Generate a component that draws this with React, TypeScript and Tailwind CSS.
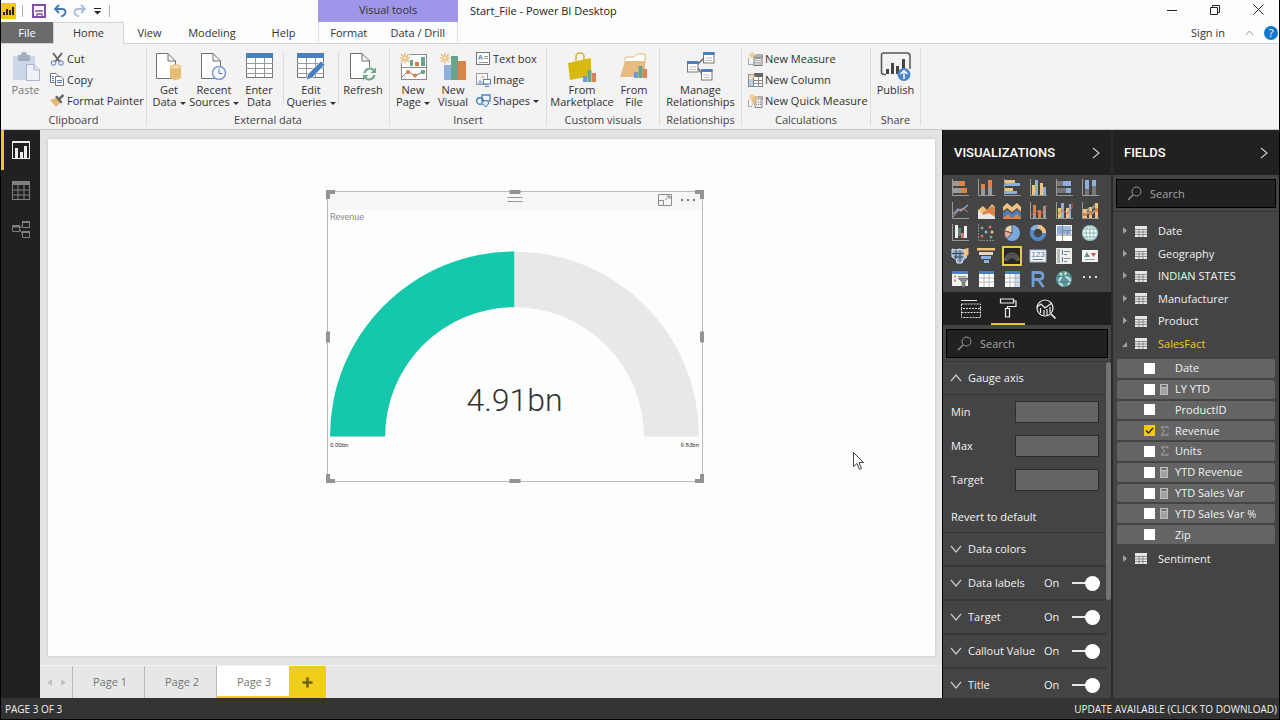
import React from 'react';

type Bar = [number, number, number, number, string];

const OR = '#e08146';
const BL = '#8bb0dc';
const DB = '#4a7fbd';
const YE = '#f0c27d';
const GR = '#9b9b9b';
const INK = '#6f6f6f';

function Bars({ d }: { d: Bar[] }) {
  return (
    <>
      {d.map(([x, y, w, h, c], i) => (
        <rect key={i} x={x} y={y} width={w} height={h} fill={c} />
      ))}
    </>
  );
}

function Svg({ w, h, children }: { w: number; h: number; children: React.ReactNode }) {
  return (
    <svg width={w} height={h} viewBox={`0 0 ${w} ${h}`} fill="none" aria-hidden="true" className="shrink-0">
      {children}
    </svg>
  );
}

const Axis = () => <path d="M1.5 0V16.500H18" stroke="#9a9a9a" />;

/* ---------- ribbon icons ---------- */

const Burst = ({ x = 6, y = 6, s = 1 }: { x?: number; y?: number; s?: number }) => (
  <g transform={`translate(${x} ${y}) scale(${s})`} stroke="#e9b872" strokeWidth="1.2">
    <path d="M0-5.500V5.500M-5.500 0H5.500M-4-4L4 4M4-4L-4 4" />
    <circle r="2" fill="#fff3dc" />
  </g>
);

const Sheet = () => <path d="M1.500 1.500H13L20.500 9V26.500H1.500ZM13 1.500V9H20.500" fill="#fff" stroke={INK} />;

const PasteIcon = () => (
  <Svg w={28} h={30}>
    <rect x="1" y="4" width="22" height="24" fill="#cdd7ea" />
    <path d="M6 3H9Q9 0 12 0T15 3H18V9H6Z" fill="#a4adbd" />
    <path d="M14.500 12.500H22L27.500 18V28.500H14.500ZM22 12.500V18H27.500" fill="#eef1f8" stroke="#a9b5d0" />
  </Svg>
);
const GetDataIcon = () => (
  <Svg w={28} h={29}>
    <Sheet />
    <path d="M15 15V26Q20.500 30 26 26V15Z" fill="#e5bd73" />
    <ellipse cx="20.500" cy="15" rx="5.500" ry="2.200" fill="#f4dba8" stroke="#e5bd73" />
  </Svg>
);
const RecentIcon = () => (
  <Svg w={28} h={29}>
    <Sheet />
    <circle cx="19" cy="21" r="6.500" fill="#f8faff" stroke="#7f9bc8" strokeWidth="1.500" />
    <path d="M19 16.500V21.500H22.500" stroke="#5578ae" />
  </Svg>
);
const TableGrid = () => (
  <>
    <rect x="0.500" y="1.500" width="26" height="24" fill="#fff" stroke="#777" />
    <rect x="0" y="1" width="27" height="5" fill={DB} />
    <path d="M9.500 6V25M18.500 6V25M0 11.500H27M0 16.500H27M0 21.500H27" stroke="#9a9a9a" />
  </>
);
const EnterDataIcon = () => (
  <Svg w={27} h={29}>
    <TableGrid />
  </Svg>
);
const EditQueriesIcon = () => (
  <Svg w={28} h={29}>
    <TableGrid />
    <path d="M9 28L11 22L24 9L28 12.500L15 26Z" fill="#4a7fbd" stroke="#f3f3f3" strokeWidth="0.800" />
  </Svg>
);
const RefreshIcon = () => (
  <Svg w={28} h={29}>
    <Sheet />
    <circle cx="20.500" cy="22" r="7" fill="#f3f3f3" />
    <path d="M15.500 21A5.500 5.500 0 0 1 25 18.500M25.500 23A5.500 5.500 0 0 1 16 25.500" stroke="#72a78d" strokeWidth="2" />
    <path d="M27 15.500V21H21.500ZM14 28.500V23H19.500Z" fill="#72a78d" />
  </Svg>
);
const NewPageIcon = () => (
  <Svg w={28} h={29}>
    <rect x="2.500" y="2.500" width="25" height="25" fill="#fff" stroke="#8a8a8a" />
    <path d="M2 15.500H28" stroke="#8a8a8a" />
    <Bars d={[[11, 8, 3, 6, '#69a58b'], [16, 10, 4, 4, '#d97b45'], [22, 5, 4, 9, '#69a58b']]} />
    <path d="M3 25L9 19.500L16 24L25 19" stroke="#777" />
    <circle cx="9" cy="20" r="2" fill="#d97b45" />
    <circle cx="16" cy="23.500" r="2" fill="#d97b45" />
    <circle cx="24" cy="20" r="2.300" fill="#69a58b" />
    <rect x="0" y="0" width="11" height="11" fill="#f3f3f3" />
    <Burst />
  </Svg>
);
const NewVisualIcon = () => (
  <Svg w={28} h={29}>
    <Bars d={[[5, 13, 7, 15, '#8fb0d8'], [12, 4, 7, 24, '#69a58b'], [19, 9, 8, 19, '#df824c']]} />
    <Burst x={6} y={6} />
  </Svg>
);
const MiniBars = ({ x, y }: { x: number; y: number }) => (
  <g transform={`translate(${x} ${y})`}>
    <Bars d={[[0, 6, 4, 6, '#6e9bd0'], [4.500, 0, 4, 12, '#69a58b'], [9, 3, 4, 9, '#df824c']]} />
  </g>
);
const MarketIcon = () => (
  <Svg w={28} h={31}>
    <path d="M8 9V5Q8 1 12 1T16 5V8" stroke="#d5b33b" strokeWidth="1.500" />
    <path d="M0 11L23 6V24L2 28Z" fill="#d9b90f" />
    <MiniBars x={15} y={18} />
  </Svg>
);
const FileIcon = () => (
  <Svg w={28} h={29}>
    <path d="M4 9L6 5H14L17 2H25V11" fill="#fff" stroke="#e6b678" />
    <path d="M0 25L5 9H25V25Z" fill="#e8bc80" />
    <MiniBars x={14} y={14} />
  </Svg>
);
const RelIcon = () => (
  <Svg w={28} h={29}>
    <path d="M10 13L17 6M10 15L16 23" stroke="#666" strokeWidth="1.500" />
    {[[0.500, 9.500], [16.500, 0.500], [14.500, 17.500]].map(([x, y]) => (
      <g key={x} transform={`translate(${x} ${y})`}>
        <rect width="10.500" height="10.500" fill="#fff" stroke="#777" />
        <rect x="-0.500" y="-0.500" width="11.500" height="3" fill={DB} />
        <path d="M2 5.500H8.500M2 8H8.500" stroke="#bbb" />
      </g>
    ))}
  </Svg>
);
const PublishIcon = () => (
  <Svg w={31} h={30}>
    <path d="M6 22.500H4Q1.500 22.500 1.500 20V3Q1.500 1 4 1H27Q30 1 30 4V17" stroke="#555" strokeWidth="1.500" />
    <Bars d={[[6, 17, 3, 5, '#444'], [11, 11, 3, 11, '#444'], [16, 14, 3, 8, '#444'], [22, 7, 3, 12, '#444']]} />
    <circle cx="24" cy="22.500" r="6.500" fill="#4a84c4" />
    <path d="M24 27V19M20.500 22L24 18.500L27.500 22" stroke="#fff" strokeWidth="1.500" />
  </Svg>
);

const CutIcon = () => (
  <Svg w={15} h={14}>
    <path d="M3 1L10 10M12 1L5 10" stroke="#666" strokeWidth="2" />
    <circle cx="3.500" cy="11" r="2.200" stroke="#7f96bd" strokeWidth="1.200" />
    <circle cx="11" cy="11" r="2.200" stroke="#7f96bd" strokeWidth="1.200" />
  </Svg>
);
const CopyIcon = () => (
  <Svg w={15} h={14}>
    <path d="M0.500 0.500H6L8.500 3V9.500H0.500Z" fill="#fff" stroke="#777" />
    <path d="M5.500 3.500H11L13.500 6V12.500H5.500Z" fill="#fff" stroke="#777" />
    <path d="M2 3.500H4M2 5.500H4M2 7.500H4M7 7.500H12M7 9.500H12" stroke={DB} />
  </Svg>
);
const PainterIcon = () => (
  <Svg w={15} h={14}>
    <path d="M0 6L6 4L10 9L6 13Z" fill="#e6ba74" />
    <path d="M5 3L7 1.500L12.500 8L10.500 9.500Z" fill="#666" />
    <path d="M9 5L13.500 1" stroke="#666" strokeWidth="2.500" />
  </Svg>
);
const TextBoxIcon = () => (
  <Svg w={15} h={14}>
    <rect x="0.500" y="0.500" width="13" height="12" fill="#fff" stroke="#777" />
    <path d="M2.500 7.500L4.500 3L6.500 7.500M3 6H6" stroke={DB} />
    <path d="M8 4.500H12M8 6.500H12M2.500 10.500H12" stroke="#999" />
  </Svg>
);
const ImageIcon = () => (
  <Svg w={15} h={14}>
    <rect x="0.500" y="0.500" width="11" height="11" fill="#fff" stroke="#999" />
    <circle cx="7" cy="4" r="1.500" fill="#efc384" />
    <path d="M1 11L4 6L8 11Z" fill="#a9bfdc" />
    <rect x="7.500" y="6.500" width="7" height="4.500" fill="#fff" stroke={DB} />
    <path d="M9 13.500H13" stroke={DB} />
  </Svg>
);
const ShapesIcon = () => (
  <Svg w={15} h={14}>
    <circle cx="4" cy="7" r="3.300" stroke={DB} strokeWidth="1.400" />
    <rect x="6" y="1" width="8" height="6" stroke={DB} strokeWidth="1.400" />
    <path d="M5 9L10 6L13 9L10 13Z" fill="#dbe6f4" stroke={DB} />
  </Svg>
);
const CalcIcon = () => (
  <Svg w={15} h={15}>
    <path d="M0.500 7V13.500H5M8 3.500H14.500V7" stroke="#aaa" />
    <rect x="6" y="5" width="8" height="9.500" fill="#eee" stroke="#777" />
    <path d="M7 7H13" stroke="#777" strokeWidth="1.500" />
    <path d="M7.500 9.500H13M7.500 11.500H13M7.500 13H13" stroke="#777" strokeDasharray="1 1" />
    <Burst x={4} y={4} s={0.6} />
  </Svg>
);
const ColumnIcon = () => (
  <Svg w={15} h={15}>
    <rect x="0.500" y="2.500" width="14" height="12" fill="#fff" stroke="#888" />
    <rect x="6" y="1" width="9" height="4" fill="#666" />
    <rect x="1" y="7" width="4" height="7" fill="#b9d0ed" />
    <path d="M5.500 5V14M10.500 5V14M5 8.500H14M5 11.500H14" stroke="#888" />
    <Burst x={4} y={4} s={0.6} />
  </Svg>
);
const QuickIcon = () => (
  <Svg w={15} h={15}>
    <path d="M0.500 7V13.500H4M9 3.500H14.500V7" stroke="#aaa" />
    <rect x="7" y="5" width="7" height="9.500" fill="#eee" stroke="#888" />
    <path d="M8 7H13M8 9.500H13M8 11.500H13" stroke="#888" strokeDasharray="1 1" />
    <path d="M6 3H10L7 7H9L3 14L5 9H3Z" fill="#eabf83" />
    <Burst x={4} y={4} s={0.6} />
  </Svg>
);

const Caret = () => <span className="ml-[3px] inline-block border-x-[3px] border-t-[3px] border-x-transparent border-t-[#333] align-middle" />;

function BigButton({ icon, lines, width, caret, faded }: { icon: React.ReactNode; lines: string[]; width: string; caret?: boolean; faded?: boolean }) {
  return (
    <button type="button" className={`flex flex-col items-center pt-1 ${width} ${faded ? 'text-[#777]' : 'text-[#303030]'}`}>
      <span className="flex h-8 items-start">{icon}</span>
      {lines.map((l, i) => (
        <span key={l} className="whitespace-nowrap">
          {l}
          {caret && i === lines.length - 1 && <Caret />}
        </span>
      ))}
    </button>
  );
}

function SmallButton({ icon, label, caret }: { icon: React.ReactNode; label: string; caret?: boolean }) {
  return (
    <button type="button" className="flex h-[21px] items-center whitespace-nowrap text-[#303030]">
      <span className="flex w-[17px]">{icon}</span>
      <span>
        {label}
        {caret && <Caret />}
      </span>
    </button>
  );
}

function Group({ label, width, children }: { label: string; width: string; children: React.ReactNode }) {
  return (
    <section aria-label={label} className={`flex flex-none flex-col border-r border-[#dedede] ${width}`}>
      <div className="flex h-[67px] items-start">{children}</div>
      <div className="text-center text-[#444]">{label}</div>
    </section>
  );
}

/* ---------- visualization gallery ---------- */

const gallery: { name: string; art: React.ReactNode }[] = [
  { name: 'Stacked bar', art: <><Axis /><Bars d={[[2, 2, 6, 5, GR], [8, 2, 6, 5, OR], [2, 9, 8, 5, GR], [10, 9, 6, 5, OR]]} /></> },
  { name: 'Stacked column', art: <><Axis /><Bars d={[[4, 10, 4, 6, GR], [4, 5, 4, 5, OR], [11, 8, 4, 8, GR], [11, 1, 4, 7, OR]]} /></> },
  { name: 'Clustered bar', art: <><Axis /><Bars d={[[2, 1, 10, 3, YE], [2, 4, 15, 3, BL], [2, 9, 8, 3, YE], [2, 12, 12, 3, BL]]} /></> },
  { name: 'Clustered column', art: <><Axis /><Bars d={[[3, 6, 3, 10, YE], [6, 1, 3, 15, BL], [11, 4, 3, 12, YE], [14, 8, 3, 8, BL]]} /></> },
  { name: '100% stacked bar', art: <><Axis /><Bars d={[[2, 2, 6, 5, '#777'], [8, 2, 8, 5, BL], [2, 9, 9, 5, '#777'], [11, 9, 5, 5, BL]]} /></> },
  { name: '100% stacked column', art: <><Axis /><Bars d={[[4, 1, 4, 9, BL], [4, 10, 4, 6, '#777'], [11, 1, 4, 6, BL], [11, 7, 4, 9, '#777']]} /></> },
  { name: 'Line', art: <><Axis /><path d="M2 12L7 7L10 9L17 3" stroke={BL} strokeWidth="1.300" /><path d="M2 15L7 9L12 6L17 10" stroke="#d58c86" /></> },
  { name: 'Area', art: <><path d="M1 8L6 4L10 8L15 2L18 5V17H1Z" fill={YE} /><path d="M6 10L10 8L15 4L18 6V17H6Z" fill={OR} /><path d="M1 8L6 13L12 11L18 15V17H1Z" fill="#e8e8e8" /></> },
  { name: 'Stacked area', art: <><path d="M0 5L4 1L9 5L14 1L18 5V17H0Z" fill={YE} /><path d="M0 9L4 6L9 10L14 6L18 10V17H0Z" fill="#555" /><path d="M0 11L4 8L9 12L14 8L18 12V17H0Z" fill={DB} /><path d="M0 16L5 12L9 16L14 12L18 16V17H0Z" fill={OR} /></> },
  { name: 'Line and stacked column', art: <><Axis /><Bars d={[[4, 3, 3, 8, OR], [4, 11, 3, 5, GR], [9, 8, 3, 8, OR], [14, 4, 3, 12, GR]]} /><path d="M2 13L8 9L12 12L18 3" stroke="#e15c47" /></> },
  { name: 'Line and clustered column', art: <><Axis /><Bars d={[[3, 6, 3, 10, YE], [6, 1, 3, 15, BL], [11, 6, 3, 10, YE], [14, 2, 2, 14, BL]]} /><path d="M2 13L8 8L12 12L17 6V1" stroke="#e15c47" /></> },
  { name: 'Ribbon', art: <><Axis /><Bars d={[[2, 7, 4, 9, YE], [8, 5, 3, 11, YE], [14, 1, 3, 15, YE], [2, 11, 4, 3, OR], [8, 9, 3, 4, OR], [14, 6, 3, 4, OR]]} /><path d="M6 9L8 6M6 12L8 10M11 7L14 3M11 12L14 8" stroke={GR} strokeWidth="2" /></> },
  { name: 'Waterfall', art: <><Axis /><Bars d={[[4, 1, 3, 13, '#eee'], [7, 4, 3, 8, '#56876e'], [10, 9, 3, 5, '#d77b72'], [13, 2, 3, 12, '#eee']]} /></> },
  { name: 'Scatter', art: <><path d="M1.500 0V16.500H18" stroke="#888" strokeDasharray="2 1" /><circle cx="5" cy="4" r="1.500" fill="#79a995" /><circle cx="13" cy="3" r="1.500" fill="#d67859" /><circle cx="9" cy="8" r="1.500" fill={BL} /><circle cx="15" cy="8" r="1.500" fill={YE} /><circle cx="5" cy="12" r="1.500" fill="#c97373" /><circle cx="14" cy="13" r="1.500" fill="#72a78d" /></> },
  { name: 'Pie', art: <><circle cx="9" cy="9" r="8" fill="#7aa9db" /><path d="M9 9V1A8 8 0 0 0 1.500 7Z" fill="#f0d5a9" stroke="#444" strokeWidth="0.800" /><path d="M9 9L1.500 7A8 8 0 0 0 4 15Z" fill="#e7a49c" stroke="#444" strokeWidth="0.800" /></> },
  { name: 'Donut', art: <><circle cx="9" cy="9" r="6.200" stroke="#4f8ac6" strokeWidth="4" /><path d="M9 2.800A6.200 6.200 0 0 1 15.200 9" stroke={YE} strokeWidth="4" /><path d="M3 6A6.200 6.200 0 0 1 9 2.800" stroke={BL} strokeWidth="4" /></> },
  { name: 'Treemap', art: <><rect x="1" y="1" width="16" height="16" fill="#fff" /><Bars d={[[2, 2, 5, 8, BL], [8, 2, 8, 4, '#9fbde0'], [8, 7, 4, 3, BL], [13, 7, 3, 3, BL]]} /><path d="M1 11H17M7.500 1V17M12.500 6V11M8 6.500H17" stroke="#888" /></> },
  { name: 'Map', art: <><circle cx="9" cy="9" r="7.500" fill="#f6fbff" stroke="#9ec4dc" strokeWidth="1.200" /><path d="M9 1.500V16.500M2 9H16M3 5H15M3 13H15" stroke="#7cb39c" strokeWidth="0.900" /><ellipse cx="9" cy="9" rx="4" ry="7.500" stroke="#7cb39c" strokeWidth="0.900" /></> },
  { name: 'Filled map', art: <><path d="M1 2L5 3L8 2L13 3V9L16 10L12 13L11 16H6L5 12L1 10Z" fill={BL} stroke="#e6e6e6" /><path d="M13 2L17.500 1V8L13 10Z" fill={YE} /><path d="M1 6.500H13M5 3V12M9 4V15M3 10H12" stroke="#444" /></> },
  { name: 'Funnel', art: <Bars d={[[0, 1, 18, 2.500, YE], [2, 5, 14, 3, '#e8d6bd'], [4, 9, 10, 3, BL], [7, 13, 5, 3, BL]]} /> },
  { name: 'Gauge', art: <><path d="M3 14A6.200 6.200 0 0 1 15 14" stroke="#555" strokeWidth="4" /><path d="M2 13A7 7 0 0 1 16 13" stroke="#777" /></> },
  { name: 'Card', art: <><rect x="1" y="3" width="16" height="12" fill="#f5f5f5" stroke="#9eb4cf" /><text x="9" y="10" textAnchor="middle" fontSize="8" fontFamily="Liberation Sans, sans-serif" fill="#4774a8">123</text><path d="M4 12.500H14" stroke="#777" /></> },
  { name: 'Multi-row card', art: <><rect x="1" y="1" width="16" height="16" fill="#eee" /><Bars d={[[2, 2, 3, 14, '#bbb'], [7, 3, 1, 5, DB], [7, 10, 1, 5, DB]]} /><path d="M9 4.500H15M9 7.500H12M9 11.500H15M9 14.500H12" stroke="#888" /></> },
  { name: 'KPI', art: <><rect x="1" y="3" width="16" height="12" fill="#f5f5f5" /><path d="M3 10L6 5L9 10Z" fill="#64987e" /><path d="M10 6H15L12.500 10Z" fill="#c65348" /><path d="M4 12.500H14" stroke="#999" /></> },
  { name: 'Slicer', art: <><rect x="1" y="1" width="16" height="15" fill="#f5f5f5" /><rect x="1" y="1" width="16" height="3" fill={DB} /><path d="M3 6.500H5M3 10.500H5" stroke={OR} strokeWidth="2" /><path d="M7 6.500H15" stroke="#999" /><path d="M7 8H18L14 12V17L11 18V12Z" fill="#888" stroke="#444" strokeWidth="0.500" /></> },
  { name: 'Table', art: <><rect x="2" y="2" width="15" height="15" fill="#fff" /><rect x="2" y="1" width="15" height="3" fill={DB} /><path d="M7 4V17M12 4V17M2 8H17M2 12H17" stroke="#b5b5b5" /></> },
  { name: 'Matrix', art: <><rect x="2" y="2" width="15" height="15" fill="#fff" /><rect x="2" y="1" width="15" height="3" fill={DB} /><rect x="12" y="4" width="5" height="13" fill="#c9dbef" /><path d="M7 4V17M12 4V17M2 8H17M2 12H17" stroke="#b5b5b5" /></> },
  { name: 'R script visual', art: <path d="M4 17V2.500H9.500Q14 2.500 14 6T9.500 9.500H4M9 9.500L14.500 17" stroke="#6f9fd2" strokeWidth="2.800" /> },
  { name: 'ArcGIS map', art: <><circle cx="9" cy="9" r="8" fill="#5a9a92" /><path d="M5 3Q8 6 5 9T8 16M11 2Q9 6 13 8T13 15" stroke="#cbe3da" strokeWidth="2" /><path d="M2 7L16 5M2 12H16" stroke="#3d78b0" /></> },
  { name: 'More visuals', art: <path d="M2 7H4M8 7H10M14 7H16" stroke="#ddd" strokeWidth="2" /> },
];

const Chevron = ({ dir }: { dir: 'up' | 'down' | 'right' }) => (
  <Svg w={12} h={12}>
    <path
      d={dir === 'up' ? 'M1 9L6 3L11 9' : dir === 'down' ? 'M1 3L6 9L11 3' : 'M3 1L9 6L3 11'}
      stroke="#c8c8c8"
      strokeWidth="1.200"
    />
  </Svg>
);

function PaneHeader({ title }: { title: string }) {
  return (
    <div className="flex h-[45px] flex-none items-center justify-between bg-[#212121] pl-[11px] pr-[9px]">
      <h2 className="font-['Roboto','Open_Sans',sans-serif] text-[13px] font-medium leading-4 text-white">{title}</h2>
      <button type="button" aria-label={`Collapse ${title}`}>
        <Chevron dir="right" />
      </button>
    </div>
  );
}

function SearchBox() {
  return (
    <div className="mx-[3px] flex h-[29px] flex-none items-center gap-2 border border-black bg-[#212121] pl-[10px]">
      <Svg w={15} h={15}>
        <circle cx="9.500" cy="5.500" r="4.500" stroke="#9a9a9a" />
        <path d="M6 9L1 14" stroke="#9a9a9a" strokeWidth="1.200" />
      </Svg>
      <input type="text" aria-label="Search" placeholder="Search" className="h-5 w-full min-w-0 bg-transparent text-[11px] text-white outline-none placeholder:text-[#a6a6a6]" />
    </div>
  );
}

function Toggle({ label }: { label: string }) {
  const id = `toggle-${label.replace(' ', '-')}`;
  return (
    <div className="flex items-center">
      <label htmlFor={id} className="w-7">On</label>
      <span className="relative flex h-[15px] w-7 items-center">
        <span className="h-[2px] w-full bg-[#e8e8e8]" />
        <input id={id} type="checkbox" role="switch" aria-label={label} defaultChecked className="absolute right-0 size-[15px] appearance-none rounded-full bg-white" />
      </span>
    </div>
  );
}

const TableIcon = () => (
  <Svg w={12} h={11}>
    <rect width="12" height="11" fill="#e6e6e6" />
    <path d="M0 3.500H12M0 6H12M0 8.500H12M4 3V11M8 3V11" stroke="#777" strokeWidth="0.800" />
  </Svg>
);

function TreeRow({ name, open }: { name: string; open?: boolean }) {
  return (
    <button type="button" aria-expanded={!!open} className={`flex items-center pl-[9px] text-left ${open ? 'text-[#f2cb1d]' : 'text-[#f2f2f2]'}`}>
      <Svg w={13} h={10}>
        {open ? <path d="M5 3V8H0Z" fill="#a0a0a0" /> : <path d="M1 1L5 4.500L1 8Z" fill="#a0a0a0" />}
      </Svg>
      <TableIcon />
      <span className="ml-[11px]">{name}</span>
    </button>
  );
}

const fields: { name: string; kind?: 'calc' | 'sum'; on?: boolean }[] = [
  { name: 'Date' },
  { name: 'LY YTD', kind: 'calc' },
  { name: 'ProductID' },
  { name: 'Revenue', kind: 'sum', on: true },
  { name: 'Units', kind: 'sum' },
  { name: 'YTD Revenue', kind: 'calc' },
  { name: 'YTD Sales Var', kind: 'calc' },
  { name: 'YTD Sales Var %', kind: 'calc' },
  { name: 'Zip' },
];

function FieldRow({ name, kind, on }: { name: string; kind?: 'calc' | 'sum'; on?: boolean }) {
  return (
    <label className="flex items-center rounded-[2px] bg-[#646464] pl-[27px] text-[#f2f2f2]">
      <span className="relative flex size-[11px]">
        <input type="checkbox" defaultChecked={on} className="peer size-[11px] appearance-none bg-white checked:bg-[#f2c811]" />
        <svg viewBox="0 0 11 11" fill="none" aria-hidden="true" className="pointer-events-none absolute inset-0 hidden size-[11px] peer-checked:block">
          <path d="M2 5.500L4.500 8L9 3" stroke="#222" strokeWidth="1.400" />
        </svg>
      </span>
      <span className="ml-1 mr-[6px] flex w-[10px] justify-center">
        {kind === 'calc' && (
          <Svg w={8} h={11}>
            <rect width="8" height="11" fill="#bdbdbd" />
            <path d="M1.500 2H6.500" stroke="#555" strokeWidth="1.500" />
            <path d="M1.500 5H7M1.500 7H7M1.500 9H7" stroke="#555" strokeDasharray="1 1" />
          </Svg>
        )}
        {kind === 'sum' && (
          <Svg w={9} h={10}>
            <path d="M8 2.500V1H1L4.500 5L1 9H8V7.500" stroke="#a8a8a8" />
          </Svg>
        )}
      </span>
      <span className="whitespace-nowrap">{name}</span>
    </label>
  );
}

const Corner = ({ pos }: { pos: string }) => <span className={`absolute size-[9px] border-[#939393] ${pos}`} />;

function GaugeVisual() {
  return (
    <figure className="absolute left-[279px] top-[52px] flex h-[291px] w-[376px] flex-col border border-[#bcbcbc]">
      <div className="relative flex h-[18px] flex-none items-center justify-end gap-[9px] bg-[#f6f6f6] pb-[2px] pr-[7px]">
        <span className="absolute left-1/2 top-[5px] h-[5px] w-[15px] -translate-x-1/2 border-y border-[#999]" />
        <button type="button" aria-label="Focus mode">
          <Svg w={14} h={12}>
            <path d="M0.500 0.500H13.500V11.500H0.500ZM0.500 6.500H5.500V11.500M7 6L12 2M8.500 2H12V5" stroke="#8c8c8c" />
          </Svg>
        </button>
        <button type="button" aria-label="More options">
          <Svg w={14} h={4}>
            <path d="M0 2H2M6 2H8M12 2H14" stroke="#777" strokeWidth="2" />
          </Svg>
        </button>
      </div>
      <figcaption className="pl-[2px] font-['Roboto',sans-serif] text-[9px] leading-[14px] text-[#8b8b8b]">Revenue</figcaption>
      <div className="relative ml-[2px] mr-[3px] mt-[27px]">
        <svg viewBox="0 0 368 185" className="block w-full" role="img" aria-label="Revenue gauge">
          <path d="M0 185A184 184 0 0 1 184 0.500V56A129 129 0 0 0 55 185Z" fill="#15c8ab" />
          <path d="M368 185A184 184 0 0 0 184 0.500V56A129 129 0 0 1 313 185Z" fill="#e8e8e8" />
        </svg>
        <span className="absolute inset-x-0 bottom-[16px] text-center font-['Roboto',sans-serif] text-[32px] font-light leading-[42px] text-[#333]">4.91bn</span>
      </div>
      <div className="ml-[2px] mr-[3px] mt-1 flex justify-between font-['Roboto',sans-serif] text-[6px] leading-[8px] text-[#333]">
        <span>0.00bn</span>
        <span>9.83bn</span>
      </div>
      <Corner pos="-left-[2px] -top-[2px] border-l-4 border-t-4" />
      <Corner pos="-right-[2px] -top-[2px] border-r-4 border-t-4" />
      <Corner pos="-bottom-[2px] -left-[2px] border-b-4 border-l-4" />
      <Corner pos="-bottom-[2px] -right-[2px] border-b-4 border-r-4" />
      <span className="absolute -top-[2px] left-1/2 h-1 w-[11px] -translate-x-1/2 bg-[#939393]" />
      <span className="absolute -bottom-[2px] left-1/2 h-1 w-[11px] -translate-x-1/2 bg-[#939393]" />
      <span className="absolute -left-[2px] top-1/2 h-[11px] w-1 -translate-y-1/2 bg-[#939393]" />
      <span className="absolute -right-[2px] top-1/2 h-[11px] w-1 -translate-y-1/2 bg-[#939393]" />
    </figure>
  );
}

const pageTab = 'w-[72px] border-r border-[#b9b9b9] pl-[3px] text-center font-medium text-[#777]';
const sep = 'h-3 w-px bg-[#b0b0b0]';

export default function App() {
  return (
    <div className="flex h-screen flex-col overflow-hidden border-x border-b border-black bg-[#fdfdfd] font-['Open_Sans','Noto_Sans',sans-serif] text-[11px] leading-[12px] text-[#333]">
      {/* Title bar */}
      <header className="flex h-[22px] flex-none">
        <div className="flex w-[317px] items-center">
          <Svg w={15} h={16}>
            <rect width="15" height="16" fill="#f0c90f" />
            <Bars d={[[2, 9, 2, 3, '#222'], [5, 6, 2, 6, '#222'], [8, 7, 2, 5, '#222'], [11, 4, 2, 8, '#222']]} />
          </Svg>
          <span className={`ml-[6px] ${sep}`} />
          <button type="button" aria-label="Save" className="ml-[9px]">
            <Svg w={14} h={14}>
              <path d="M1 1H13V13H1Z" stroke="#7e4fa3" strokeWidth="2" />
              <path d="M3 7H11M5 13V10H10V13" stroke="#7e4fa3" strokeWidth="1.300" />
            </Svg>
          </button>
          <button type="button" aria-label="Undo" className="ml-[7px]">
            <Svg w={14} h={14}>
              <path d="M2 5H9Q12.500 5 12.500 8T8 12.500M6 1L2 5L6 9" stroke="#3f79b5" strokeWidth="1.800" />
            </Svg>
          </button>
          <button type="button" aria-label="Redo" className="ml-[6px]">
            <Svg w={14} h={14}>
              <path d="M12 5H5Q1.500 5 1.500 8T6 12.500M8 1L12 5L8 9" stroke="#a9bdd6" strokeWidth="1.800" />
            </Svg>
          </button>
          <button type="button" aria-label="Customize toolbar" className="ml-[7px]">
            <Svg w={7} h={8}>
              <path d="M0 1.500H7" stroke="#222" />
              <path d="M0 4H7L3.500 7.500Z" fill="#222" />
            </Svg>
          </button>
          <span className={`ml-2 ${sep}`} />
        </div>
        <div className="w-[140px] bg-[#9f95e9] pt-1 text-center">Visual tools</div>
        <h1 className="ml-3 flex items-center text-[11px] text-[#222]">Start_File - Power BI Desktop</h1>
        <div className="ml-auto flex items-center gap-[33px] pb-[3px] pr-[15px]">
          <button type="button" aria-label="Minimize"><Svg w={10} h={10}><path d="M0 5.500H10" stroke="#222" /></Svg></button>
          <button type="button" aria-label="Restore"><Svg w={10} h={10}><path d="M0.500 2.500H7.500V9.500H0.500ZM2.500 2V0.500H9.500V7.500H8" stroke="#222" /></Svg></button>
          <button type="button" aria-label="Close"><Svg w={11} h={11}><path d="M0.500 0.500L10.500 10.500M10.500 0.500L0.500 10.500" stroke="#222" /></Svg></button>
        </div>
      </header>

      {/* Ribbon tabs */}
      <nav className="flex h-[22px] flex-none border-b border-[#d4d4d4]" aria-label="Ribbon">
        <button type="button" className="w-[52px] bg-[#6b6b6b] text-white">File</button>
        <button type="button" className="-mb-px w-[71px] border-x border-t border-[#d4d4d4] bg-[#f3f3f3] pb-px">Home</button>
        <button type="button" className="w-[51px]">View</button>
        <button type="button" className="w-[74px]">Modeling</button>
        <button type="button" className="w-[69px]">Help</button>
        <div className="flex w-[140px] border-x border-[#e2e0f2]">
          <button type="button" className="w-[60px]">Format</button>
          <button type="button" className="w-[79px]">Data / Drill</button>
        </div>
        <div className="ml-auto flex items-center pr-px">
          <button type="button">Sign in</button>
          <button type="button" aria-label="Collapse ribbon" className="ml-5">
            <Svg w={9} h={9}><path d="M1 7L4.500 3L8 7" stroke="#999" /></Svg>
          </button>
          <button type="button" aria-label="Help" className="ml-[10px] size-[14px] rounded-full bg-[#1477c9] text-[11px] leading-[14px] text-white">?</button>
        </div>
      </nav>

      {/* Ribbon */}
      <div className="flex h-[86px] flex-none overflow-hidden border-b border-[#c9c9c9] bg-[#f3f3f3] pb-[3px] pt-1">
        <Group label="Clipboard" width="w-[146px]">
          <BigButton icon={<PasteIcon />} lines={['Paste']} width="w-[49px]" faded />
          <div className="flex flex-col">
            <SmallButton icon={<CutIcon />} label="Cut" />
            <SmallButton icon={<CopyIcon />} label="Copy" />
            <SmallButton icon={<PainterIcon />} label="Format Painter" />
          </div>
        </Group>
        <Group label="External data" width="w-[243px]">
          <BigButton icon={<GetDataIcon />} lines={['Get', 'Data']} width="w-[44px]" caret />
          <BigButton icon={<RecentIcon />} lines={['Recent', 'Sources']} width="w-[46px]" caret />
          <BigButton icon={<EnterDataIcon />} lines={['Enter', 'Data']} width="w-[44px]" />
          <span className="ml-[2px] mt-1 h-[52px] w-px bg-[#dcdcdc]" />
          <BigButton icon={<EditQueriesIcon />} lines={['Edit', 'Queries']} width="w-[54px]" caret />
          <span className="mt-1 h-[52px] w-px bg-[#dcdcdc]" />
          <BigButton icon={<RefreshIcon />} lines={['Refresh']} width="w-[48px]" />
        </Group>
        <Group label="Insert" width="w-[157px]">
          <BigButton icon={<NewPageIcon />} lines={['New', 'Page']} width="w-[46px]" caret />
          <BigButton icon={<NewVisualIcon />} lines={['New', 'Visual']} width="w-[34px]" />
          <div className="ml-[6px] flex flex-col">
            <SmallButton icon={<TextBoxIcon />} label="Text box" />
            <SmallButton icon={<ImageIcon />} label="Image" />
            <SmallButton icon={<ShapesIcon />} label="Shapes" caret />
          </div>
        </Group>
        <Group label="Custom visuals" width="w-[113px]">
          <BigButton icon={<MarketIcon />} lines={['From', 'Marketplace']} width="w-[70px]" />
          <BigButton icon={<FileIcon />} lines={['From', 'File']} width="w-[34px]" />
        </Group>
        <Group label="Relationships" width="w-[82px]">
          <BigButton icon={<RelIcon />} lines={['Manage', 'Relationships']} width="w-[81px]" />
        </Group>
        <Group label="Calculations" width="w-[129px]">
          <div className="flex flex-col pl-[6px]">
            <SmallButton icon={<CalcIcon />} label="New Measure" />
            <SmallButton icon={<ColumnIcon />} label="New Column" />
            <SmallButton icon={<QuickIcon />} label="New Quick Measure" />
          </div>
        </Group>
        <Group label="Share" width="w-[50px]">
          <BigButton icon={<PublishIcon />} lines={['Publish']} width="w-[49px]" />
        </Group>
      </div>

      <main className="flex min-h-0 flex-1">
        {/* View switcher */}
        <nav aria-label="Views" className="flex w-[39px] flex-none flex-col bg-[#212121]">
          <button type="button" aria-label="Report" className="flex h-10 items-center border-l-[3px] border-[#e8c534] pl-2">
            <Svg w={18} h={18}>
              <rect x="0.500" y="0.500" width="17" height="17" stroke="#eee" />
              <path d="M0 1H18" stroke="#eee" strokeWidth="2" />
              <Bars d={[[3, 7, 3, 10, '#eee'], [8, 11, 3, 6, '#eee'], [12, 5, 3, 12, '#eee']]} />
            </Svg>
          </button>
          <button type="button" aria-label="Data" className="flex h-10 items-center pl-[11px]">
            <Svg w={18} h={19}>
              <rect x="0.500" y="0.500" width="17" height="18" stroke="#808080" />
              <rect width="18" height="4" fill="#808080" />
              <path d="M6 4V19M12 4V19M0 9H18M0 14H18" stroke="#808080" />
            </Svg>
          </button>
          <button type="button" aria-label="Relationships" className="flex h-[38px] items-center pl-[11px]">
            <Svg w={18} h={18}>
              <path d="M0.500 5.500H7.500V11.500H0.500ZM10.500 1.500H17.500V7.500H10.500ZM10.500 11.500H17.500V17.500H10.500ZM7.500 8.500L10.500 5M7.500 9L10.500 14" stroke="#808080" />
              <path d="M0 6.500H8M10 2H18M10 12H18" stroke="#808080" strokeWidth="2" />
            </Svg>
          </button>
        </nav>

        {/* Report canvas */}
        <div className="flex min-w-0 flex-1 flex-col bg-[#e4e4e4]">
          <div className="relative mb-[9px] ml-2 mr-[7px] mt-[9px] min-h-0 flex-1 bg-[#fdfdfd] shadow-[0_0_3px_rgba(0,0,0,0.15)]">
            <GaugeVisual />
            <svg width="12" height="19" viewBox="0 0 12 19" aria-hidden="true" className="absolute left-[805px] top-[313px]">
              <path d="M0.500 0.500V14.500L4 11.500L6.500 17.500L8.500 16.500L6 10.500H10.500Z" fill="#fff" stroke="#444" />
            </svg>
          </div>
          <div className="flex h-[33px] flex-none border-t border-[#f1f1f1] bg-[#e7e7e7]">
            <div className="flex w-[33px] items-center justify-center gap-[9px] border-r border-[#b9b9b9]">
              <button type="button" aria-label="Previous page"><Svg w={5} h={7}><path d="M5 0V7L0 3.500Z" fill="#c2c2c2" /></Svg></button>
              <button type="button" aria-label="Next page"><Svg w={5} h={7}><path d="M0 0V7L5 3.500Z" fill="#c2c2c2" /></Svg></button>
            </div>
            <button type="button" className={pageTab}>Page 1</button>
            <button type="button" className={pageTab}>Page 2</button>
            <button type="button" className="w-[72px] border-b-2 border-[#f0cd1c] bg-white pl-[2px] pt-[2px] text-center font-medium text-[#777]">Page 3</button>
            <button type="button" aria-label="New page" className="flex w-[37px] items-center justify-center bg-[#efce1a]">
              <Svg w={11} h={11}><path d="M5.500 0.500V10.500M0.500 5.500H10.500" stroke="#6d6220" strokeWidth="2.600" /></Svg>
            </button>
          </div>
        </div>

        {/* Visualizations */}
        <aside aria-label="Visualizations" className="flex w-[169px] flex-none flex-col border-l border-black bg-[#444]">
          <PaneHeader title="VISUALIZATIONS" />
          <div className="grid h-[117px] flex-none grid-cols-6 grid-rows-5 pb-[2px] pl-1 pr-2 pt-[2px]">
            {gallery.map((g) => (
              <button
                key={g.name}
                type="button"
                aria-label={g.name}
                className={`flex min-h-0 items-center justify-center ${g.name === 'Gauge' ? 'mx-[3px] my-px border-2 border-[#e6cf3a] bg-[#262626]' : ''}`}
              >
                <Svg w={18} h={18}>{g.art}</Svg>
              </button>
            ))}
          </div>
          <div className="flex h-[33px] flex-none bg-[#212121] pl-[9px]">
            <button type="button" aria-label="Fields" className="flex w-[38px] items-center justify-center">
              <Svg w={20} h={18}>
                <path d="M0 0.500H16" stroke="#eee" />
                <path d="M0.500 4H19.500V8.500H0.500V4M0.500 12.500H19.500V17.500H0.500V12.500M0.500 8.500V13M19.500 8.500V13" stroke="#ddd" strokeDasharray="2 1" />
              </Svg>
            </button>
            <button type="button" aria-label="Format" className="ml-px flex w-[34px] items-center justify-center border-b-2 border-[#e6c62e]">
              <Svg w={18} h={20}>
                <path d="M1.500 1H14.500V5H1.500ZM14.500 3H17V8.500H8.500V10.500M6.500 10.500H10.500V19H6.500Z" stroke="#eee" strokeWidth="1.200" />
              </Svg>
            </button>
            <button type="button" aria-label="Analytics" className="ml-[2px] flex w-[38px] items-center justify-center">
              <Svg w={20} h={20}>
                <circle cx="9" cy="9" r="8" stroke="#eee" strokeWidth="1.200" />
                <path d="M15 15L19.500 19.500" stroke="#eee" strokeWidth="1.600" />
                <path d="M1 8L5 5L9 9L16 4M4.500 9V14M8 11V16M11 10V16M14 8V14" stroke="#eee" strokeWidth="1.200" />
              </Svg>
            </button>
          </div>
          <div className="flex-none pb-[3px] pt-1"><SearchBox /></div>
          <div className="flex min-h-0 flex-1 overflow-hidden border-t border-[#363636] text-[#f2f2f2]">
            <div className="min-w-0 flex-1">
              <button type="button" className="flex h-[33px] w-full items-center gap-[6px] border-b border-[#363636] pl-[7px]">
                <Chevron dir="up" />Gauge axis
              </button>
              <div className="flex flex-col gap-3 pt-[6px]">
                {['Min', 'Max', 'Target'].map((l) => (
                  <div key={l} className="flex h-[22px] items-center justify-between pl-2 pr-[7px]">
                    <label htmlFor={`axis-${l}`}>{l}</label>
                    <input id={`axis-${l}`} type="text" className="h-[22px] w-[84px] border border-[#2c2c2c] bg-[#646464] px-1" />
                  </div>
                ))}
              </div>
              <button type="button" className="mt-[10px] flex h-[32px] w-full items-center border-b border-[#363636] pl-2">Revert to default</button>
              {['Data colors', 'Data labels', 'Target', 'Callout Value', 'Title'].map((l, i) => (
                <div key={l} className="flex h-[34px] items-center justify-between border-b-2 border-[#363636] pl-[7px] pr-[6px]">
                  <button type="button" className="flex items-center gap-[6px] whitespace-nowrap"><Chevron dir="down" />{l}</button>
                  {i > 0 && <Toggle label={l} />}
                </div>
              ))}
            </div>
            <div className="h-[238px] w-[5px] flex-none rounded-[3px] bg-[#737373]" />
          </div>
        </aside>

        {/* Fields */}
        <aside aria-label="Fields" className="flex w-[168px] flex-none flex-col border-l-2 border-[#2a2a2a] bg-[#444]">
          <PaneHeader title="FIELDS" />
          <div className="flex-none border-b border-[#333] pb-[3px] pt-1"><SearchBox /></div>
          <div className="mt-2 grid h-[135px] flex-none grid-rows-6">
            {['Date', 'Geography', 'INDIAN STATES', 'Manufacturer', 'Product'].map((n) => <TreeRow key={n} name={n} />)}
            <TreeRow name="SalesFact" open />
          </div>
          <div className="ml-1 mr-[4px] mt-1 grid h-[185px] flex-none grid-rows-9 gap-[2px]">
            {fields.map((f) => <FieldRow key={f.name} {...f} />)}
          </div>
          <div className="mt-[3px] grid h-[23px] flex-none"><TreeRow name="Sentiment" /></div>
        </aside>
      </main>

      <footer className="flex h-[21px] flex-none items-center justify-between bg-[#333] pl-1 pr-[2px] text-[10px] text-[#f2f2f2]">
        <span>PAGE 3 OF 3</span>
        <button type="button">UPDATE AVAILABLE (CLICK TO DOWNLOAD)</button>
      </footer>
    </div>
  );
}
